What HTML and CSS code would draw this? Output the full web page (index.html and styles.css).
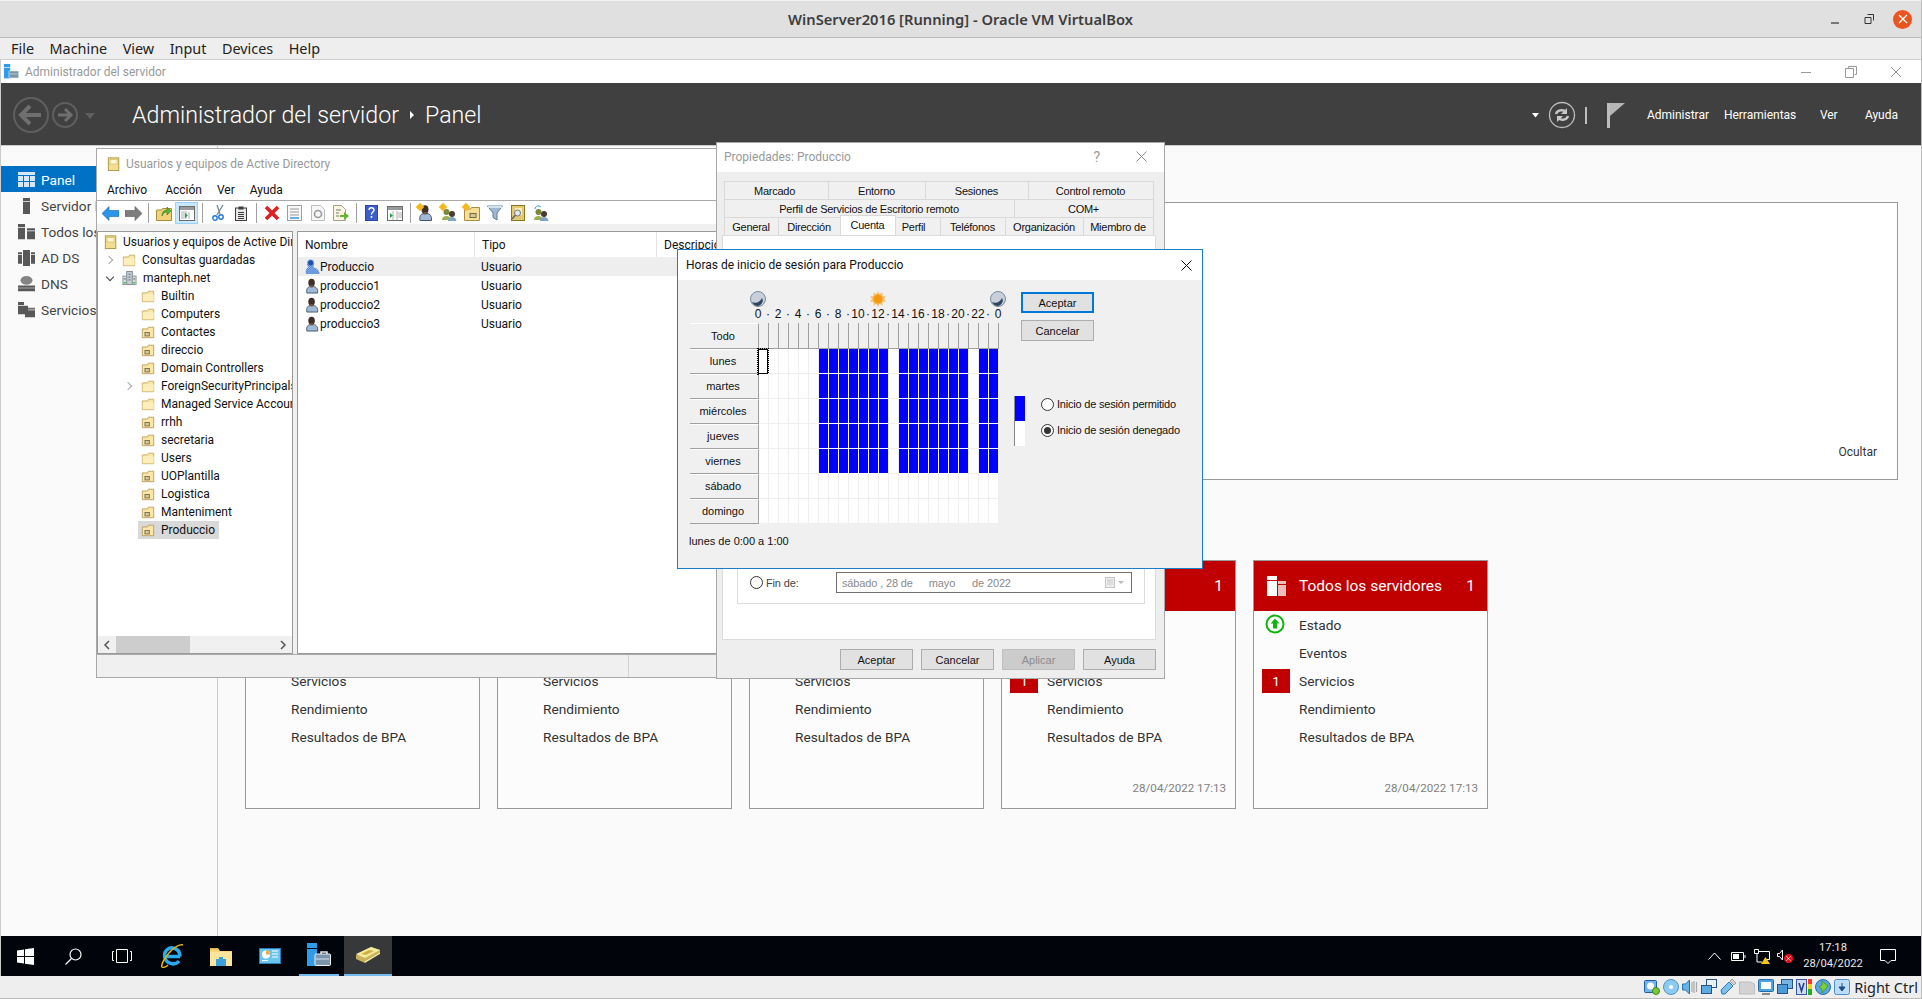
FILE: index.html
```html
<!DOCTYPE html>
<html>

<head>
    <meta charset="utf-8" />
    <title>WinServer2016 [Running] - Oracle VM VirtualBox</title>
    <link rel="stylesheet" href="styles.css">
</head>

<body>
    <svg class="defs" aria-hidden="true">
        <defs>
            <pattern id="dither" width="2" height="2" patternUnits="userSpaceOnUse">
                <rect width="2" height="2" fill="#1f5fc0" />
                <rect width="1" height="1" fill="#bcd6f5" />
                <rect x="1" y="1" width="1" height="1" fill="#bcd6f5" />
            </pattern>
            <symbol id="folder" viewBox="0 0 16 16">
                <path d="M1.5 4.5h6l1-2h6v12h-13z" fill="#fbe6a8" stroke="#c8a964" />
                <path d="M2 6h12.500v8h-12.500z" fill="#fdeebc" />
            </symbol>
            <symbol id="ou" viewBox="0 0 16 16">
                <path d="M1.500 4.500h6l1-2h6v12h-13z" fill="#fbe6a8" stroke="#b79a55" />
                <rect x="4.500" y="8.500" width="5" height="4" fill="#d8c88c" stroke="#6e6a50" />
            </symbol>
            <symbol id="book" viewBox="0 0 16 16">
                <rect x="1.500" y="1" width="12" height="14.500" fill="#f3dd8e" stroke="#a6923e" />
                <rect x="3.500" y="3" width="8" height="5" fill="#fdf6d6" stroke="#c4b060" stroke-width=".6" />
            </symbol>
            <symbol id="domain" viewBox="0 0 16 16">
                <rect x="5" y="1" width="6" height="14" fill="#c6cdd2" stroke="#7f8a92" />
                <rect x="1" y="6" width="4" height="9" fill="#d8dde0" stroke="#8c969d" />
                <rect x="11" y="6" width="4" height="9" fill="#d8dde0" stroke="#8c969d" />
                <path d="M7 4h2M7 7h2M7 10h2" stroke="#56626b" />
                <path d="M2 9h2M12 9h2" stroke="#56626b" />
                <path d="M2 13h2M12 13h2" stroke="#35c43a" stroke-width="1.500" />
            </symbol>
            <symbol id="user" viewBox="0 0 16 16">
                <path d="M2 15.500c-.8-4.500 .7-6.500 4-7h3c3 .5 5 2.500 4.500 7z" fill="#9fb9d6" stroke="#44566c" />
                <ellipse cx="7" cy="4.500" rx="3.500" ry="4.300" fill="#3e3029" />
                <rect x="5.500" y="7" width="3" height="2.500" fill="#6d5342" />
            </symbol>
            <symbol id="user-off" viewBox="0 0 16 16">
                <path d="M1 15.500c-.8-4.500 .7-7 4-7.500h3c3 .5 7.500 3 7.500 7.500z" fill="url(#dither)" />
                <ellipse cx="6" cy="4.500" rx="3.800" ry="4.500" fill="url(#dither)" />
                <ellipse cx="6" cy="3.500" rx="2.600" ry="2.800" fill="#1e50a8" />
            </symbol>
            <symbol id="server-mgr" viewBox="0 0 24 24">
                <rect x="0" y="0" width="10" height="5" fill="#2f9bea" />
                <rect x="0" y="6" width="10" height="17" fill="#2f9bea" />
                <path d="M14 11v-2h6v2" fill="none" stroke="#e9eef2" stroke-width="1.500" />
                <rect x="8" y="11" width="15.500" height="11.500" rx="1" fill="#7c95ab" stroke="#eef3f7" />
                <path d="M9 16h13" stroke="#d7e2ea" />
            </symbol>
        </defs>
    </svg>

    <header class="vbox-title">
        <span>WinServer2016 [Running] - Oracle VM VirtualBox</span>
        <div class="vbox-controls">
            <svg width="12" height="12" viewBox="0 0 12 12"><path d="M2 10h8" stroke="#333" stroke-width="1.200" /></svg>
            <svg width="12" height="12" viewBox="0 0 12 12"><path d="M4.500 1.500h6v6M2 4.500h6v6h-6z" fill="none" stroke="#333" /></svg>
            <span class="vbox-close"><svg width="10" height="10" viewBox="0 0 10 10"><path d="M1 1l8 8M9 1l-8 8" stroke="#fff" stroke-width="1.300" /></svg></span>
        </div>
    </header>
    <nav class="vbox-menu">
        <span>File</span><span>Machine</span><span>View</span><span>Input</span><span>Devices</span><span>Help</span>
    </nav>

    <div class="guest">
        <div class="sm-title">
            <svg class="sm-title-icon" width="15" height="15"><use href="#server-mgr" /></svg>
            <span>Administrador del servidor</span>
            <div class="sm-controls">
                <svg width="12" height="12" viewBox="0 0 12 12"><path d="M1 6.500h10" stroke="#999" /></svg>
                <svg width="12" height="12" viewBox="0 0 12 12"><path d="M3.500 2.500v-2h8v8h-2M.5 2.500h8v9h-8z" fill="none" stroke="#999" /></svg>
                <svg width="12" height="12" viewBox="0 0 12 12"><path d="M1 1l10 10M11 1l-10 10" stroke="#999" /></svg>
            </div>
        </div>

        <div class="sm-header">
            <svg class="nav-arrows" width="100" height="40" viewBox="0 0 100 40">
                <circle cx="18" cy="20" r="17" fill="none" stroke="#5f5f5f" stroke-width="2" />
                <path d="M8 20h20M17 11l-9 9 9 9" fill="none" stroke="#6f6f6f" stroke-width="4" />
                <circle cx="52" cy="20" r="12" fill="none" stroke="#5f5f5f" stroke-width="2" />
                <path d="M45 20h13M52 14l6 6-6 6" fill="none" stroke="#6f6f6f" stroke-width="3" />
                <path d="M72 18h10l-5 6z" fill="#5f5f5f" />
            </svg>
            <h1 class="sm-crumb">Administrador del servidor<i class="crumb-arrow"></i>Panel</h1>
            <div class="sm-actions">
                <svg class="drop" width="7" height="5" viewBox="0 0 7 5"><path d="M0 0h7l-3.500 4.500z" fill="#fff" /></svg>
                <svg width="28" height="28" viewBox="0 0 28 28">
                    <circle cx="14" cy="14" r="12.500" fill="none" stroke="#bdbdbd" stroke-width="1.300" />
                    <path d="M8 13c1-4 7-5 10-2M20 15c-1 4-7 5-10 2" fill="none" stroke="#c9c9c9" stroke-width="2.400" />
                    <path d="M19 7v6h-6zM9 21v-6h6z" fill="#c9c9c9" />
                </svg>
                <i class="action-sep"></i>
                <svg class="flag" width="18" height="25" viewBox="0 0 18 25">
                    <rect x="0" y="0" width="3" height="25" fill="#bdbdbd" />
                    <path d="M3 0h15l-15 13z" fill="#b5b5b5" />
                </svg>
                <div class="sm-menu">
                    <span class="m1">Administrar</span><span class="m2">Herramientas</span><span class="m3">Ver</span><span class="m4">Ayuda</span>
                </div>
            </div>
        </div>

        <div class="sm-main">
            <aside class="sidebar">
                <div class="nav-item selected">
                    <svg width="17" height="15" viewBox="0 0 17 15"><path d="M0 0h17v3h-17zM0 4h5v5h-5zM6 4h5v5h-5zM12 4h5v5h-5zM0 10h5v5h-5zM6 10h5v5h-5zM12 10h5v5h-5z" fill="#d5e8f7" /></svg>
                    <span>Panel</span>
                </div>
                <div class="nav-item">
                    <svg width="17" height="16" viewBox="0 0 17 22" preserveAspectRatio="none"><path d="M5 0h7v4h-7zM5 5h7v17h-7z" fill="#585858" /></svg>
                    <span>Servidor local</span>
                </div>
                <div class="nav-item">
                    <svg width="17" height="16" viewBox="0 0 17 22" preserveAspectRatio="none"><path d="M0 0h7v4h-7zM0 5h7v16h-7zM9 6h8v3h-8zM9 10h8v11h-8z" fill="#585858" /></svg>
                    <span>Todos los servidores</span>
                </div>
                <div class="nav-item">
                    <svg width="17" height="16" viewBox="0 0 17 22" preserveAspectRatio="none"><path d="M5 0h7v22h-7zM0 3h4v3h-4zM13 3h4v3h-4zM0 7h4v12h-4zM13 7h4v12h-4z" fill="#585858" /></svg>
                    <span>AD DS</span>
                </div>
                <div class="nav-item">
                    <svg width="17" height="16" viewBox="0 0 17 22" preserveAspectRatio="none"><circle cx="8.500" cy="6" r="6" fill="#858585" /><path d="M0 13h17v3h-17zM0 17h17v4h-17z" fill="#585858" /></svg>
                    <span>DNS</span>
                </div>
                <div class="nav-item">
                    <svg width="17" height="16" viewBox="0 0 17 22" preserveAspectRatio="none"><path d="M0 0h6v4h-6zM0 5h10v12h-10zM7 8h10v13h-10z" fill="#585858" /><path d="M10 9h7v3h-7z" fill="#9a9a9a" /></svg>
                    <span>Servicios de archivos</span>
                </div>
            </aside>

            <main class="dashboard">
                <section class="welcome"><span>Ocultar</span></section>
                <div class="cards">
                    <article class="card">
                        <div class="card-head"></div>
                        <ul class="card-list">
                            <li></li><li></li><li>Servicios</li><li>Rendimiento</li><li>Resultados de BPA</li>
                        </ul>
                    </article>
                    <article class="card">
                        <div class="card-head"></div>
                        <ul class="card-list">
                            <li></li><li></li><li>Servicios</li><li>Rendimiento</li><li>Resultados de BPA</li>
                        </ul>
                    </article>
                    <article class="card">
                        <div class="card-head"></div>
                        <ul class="card-list">
                            <li></li><li></li><li>Servicios</li><li>Rendimiento</li><li>Resultados de BPA</li>
                        </ul>
                    </article>
                    <article class="card">
                        <div class="card-head"><b>1</b></div>
                        <ul class="card-list">
                            <li></li><li></li><li><i class="badge">1</i>Servicios</li><li>Rendimiento</li><li>Resultados de BPA</li>
                        </ul>
                        <time>28/04/2022 17:13</time>
                    </article>
                    <article class="card">
                        <div class="card-head">
                            <svg width="20" height="20" viewBox="0 0 20 20"><path d="M0 0h10v4h-10zM0 5h10v15h-10z" fill="#fff" /><path d="M11 5h8v3h-8zM11 9h8v11h-8z" fill="#f0bcbc" /></svg>
                            <span>Todos los servidores</span><b>1</b>
                        </div>
                        <ul class="card-list">
                            <li>
                                <svg class="ok" width="20" height="20" viewBox="0 0 20 20"><circle cx="10" cy="10" r="8.500" fill="#fff" stroke="#0fb50f" stroke-width="2" /><path d="M10 4.500l4.500 5h-2.500v5h-4v-5h-2.500z" fill="#0fb50f" /></svg>
                                Estado
                            </li>
                            <li>Eventos</li><li><i class="badge">1</i>Servicios</li><li>Rendimiento</li><li>Resultados de BPA</li>
                        </ul>
                        <time>28/04/2022 17:13</time>
                    </article>
                </div>
            </main>
        </div>

        <footer class="taskbar">
            <svg class="tb-win" width="17" height="17" viewBox="0 0 17 17"><path d="M0 2.500l7-1v6.500h-7zM8 1.300l9-1.300v8h-9zM0 9h7v6.500l-7-1zM8 9h9v8l-9-1.300z" fill="#fff" /></svg>
            <svg class="tb-search" width="17" height="17" viewBox="0 0 17 17"><circle cx="10.500" cy="6.500" r="5.500" fill="none" stroke="#fff" stroke-width="1.200" /><path d="M6.500 10.500l-6 6" stroke="#fff" stroke-width="1.300" /></svg>
            <svg class="tb-view" width="20" height="14" viewBox="0 0 20 14"><path d="M4.500.5h11v13h-11zM2 2.500h-1.500v9h1.500M18 2.500h1.500v9h-1.500" fill="none" stroke="#fff" /></svg>
            <svg class="tb-ie" width="24" height="24" viewBox="0 0 24 24">
                <path d="M20 12.500h-15M19 17c-4 5-12 3-14-3-2-7 4-11 8-10 5 1 7 4 7 8.500" fill="none" stroke="#29aaee" stroke-width="3.500" />
                <path d="M23 1c-3-1-9 2-14 8-5 6-8 12-7 14 1 1 4 0 6-2" fill="none" stroke="#e8b010" stroke-width="1.500" />
            </svg>
            <svg class="tb-folder" width="22" height="19" viewBox="0 0 22 19"><path d="M0 1h8l2 3h12v15h-22z" fill="#f7d67a" /><path d="M0 5h22v14h-22z" fill="#fbe49b" /><path d="M6 19v-7h3v-2h4v2h3v7z" fill="#3b9fdc" /><path d="M0 1h8v1.500h-8z" fill="#e6b84a" /></svg>
            <svg class="tb-panel" width="22" height="16" viewBox="0 0 22 16"><rect width="22" height="16" fill="#2b7fb8" /><rect x="1" y="1" width="20" height="14" fill="#69c4f0" /><circle cx="7" cy="6.500" r="4" fill="#fff" /><path d="M7 6.500v-4a4 4 0 0 1 4 4z" fill="#f2a93b" /><path d="M13 3h6M13 6h6M13 9h6M3 12.500h6" stroke="#fff" /></svg>
            <div class="tb-task open"><svg width="24" height="24"><use href="#server-mgr" /></svg></div>
            <div class="tb-task active">
                <svg width="26" height="18" viewBox="0 0 26 18"><path d="M1 9l15-8 9 3v4l-15 9-9-4z" fill="#c7b45a" /><path d="M1 8l15-7 9 3-15 8z" fill="#f5eba0" /><path d="M6 8l8-4 5 1-8 4z" fill="#d2b040" /><path d="M10 16l15-9" stroke="#fff8c8" /></svg>
            </div>
            <div class="tray">
                <svg class="tray-up" width="13" height="8" viewBox="0 0 13 8"><path d="M.5 7.500l6-6.500 6 6.500" fill="none" stroke="#fff" /></svg>
                <svg width="15" height="9" viewBox="0 0 15 9"><path d="M.5.500h12v8h-12z" fill="none" stroke="#fff" /><path d="M2 2h6v5h-6z" fill="#fff" /><path d="M13.500 3h1v3h-1z" fill="#fff" /></svg>
                <svg width="16" height="16" viewBox="0 0 16 16"><path d="M.5 1.500h4v4h-4zM4.500 3.500h11v8h-5M3 6v8h5" fill="none" stroke="#fff" /><path d="M11.500 9l4.500 7h-9z" fill="#f9c516" /></svg>
                <svg class="tray-vol" width="16" height="14" viewBox="0 0 16 14"><path d="M.5 4.500h2l3-3.500v10l-3-3.500h-2z" fill="none" stroke="#fff" /><circle cx="11.500" cy="9.500" r="4.500" fill="#e81123" /><path d="M9.500 7.500l4 4M13.500 7.500l-4 4" stroke="#fff" /></svg>
                <div class="clock"><span>17:18</span><span>28/04/2022</span></div>
                <svg class="tray-note" width="16" height="15" viewBox="0 0 16 15"><path d="M.5.500h15v11h-4.500l-3 3-3-3h-4.500z" fill="none" stroke="#fff" /></svg>
            </div>
        </footer>
    </div>

    <footer class="vbox-status">
        <svg width="16" height="16" viewBox="0 0 16 16"><rect x=".5" y="1.500" width="12" height="12" rx="1" fill="#6fb4ea" stroke="#1f5f9e" /><circle cx="6.500" cy="7" r="3.500" fill="#fff" /><circle cx="12" cy="12" r="3.500" fill="#79c83c" stroke="#3f8e1c" /></svg>
        <svg width="16" height="16" viewBox="0 0 16 16"><circle cx="8" cy="8" r="7.500" fill="#8ecbf1" stroke="#4e93c8" /><circle cx="8" cy="8" r="2" fill="#fff" /></svg>
        <svg width="16" height="16" viewBox="0 0 16 16"><path d="M.5 5h3l4-4v14l-4-4h-3z" fill="#65b2e8" stroke="#2e6fa6" /><path d="M10 3v10M12 2v12M14.500 3v10" stroke="#a9a9a9" stroke-width="1.200" /></svg>
        <svg width="16" height="16" viewBox="0 0 16 16"><rect x="5.500" y=".5" width="10" height="8" fill="#e7eef5" stroke="#27547d" /><rect x=".5" y="6.500" width="10" height="8" fill="#5baae3" stroke="#27547d" /></svg>
        <svg width="16" height="16" viewBox="0 0 16 16"><path d="M1 11l8-8 4 4-8 8H2z" fill="#7cc0f0" stroke="#2e79b5" /><path d="M10 2l2-2 4 4-2 2z" fill="#d5d5d5" stroke="#777" stroke-width=".6" /></svg>
        <svg width="16" height="16" viewBox="0 0 16 16"><path d="M.5 3h11l4 2v10h-15z" fill="#d2d2d2" stroke="#bdbdbd" /></svg>
        <svg width="16" height="16" viewBox="0 0 16 16"><rect x=".5" y=".5" width="15" height="12" rx="1" fill="#4ea4e0" stroke="#236ba4" /><rect x="3" y="3" width="10" height="7" fill="#fff" /><path d="M4 15h8" stroke="#888" stroke-width="2" /></svg>
        <svg width="16" height="16" viewBox="0 0 16 16"><rect x="4.500" y=".5" width="11" height="9" fill="#74b4e6" stroke="#27547d" /><rect x=".5" y="5.500" width="10" height="9" fill="#4c9bdc" stroke="#27547d" /></svg>
        <svg width="16" height="16" viewBox="0 0 16 16"><rect x=".5" y=".5" width="10" height="15" fill="#cfdcef" stroke="#3a55a0" /><path d="M3 4l2.500 8 2.500-8" fill="none" stroke="#2a3f90" stroke-width="1.600" /><path d="M12 0h4v5h-4z" fill="#ff3a1a" /><path d="M12 5h4v5h-4z" fill="#f0d010" /><path d="M12 10h4v6h-4z" fill="#20b020" /></svg>
        <svg width="16" height="16" viewBox="0 0 16 16"><circle cx="8" cy="8" r="7.500" fill="#57a7e0" stroke="#2d6ea3" /><path d="M7 2l6 5-6 7v-4l-3-2 3-2z" fill="#7fce3a" stroke="#3d8d22" stroke-width=".7" /></svg>
        <svg width="16" height="16" viewBox="0 0 16 16"><rect x=".5" y=".5" width="15" height="15" rx="2" fill="#bcdcf7" stroke="#4a8fca" /><path d="M8 4v5M5 8h6l-3 4z" stroke="#1a4c84" fill="#1a4c84" /></svg>
        <span>Right Ctrl</span>
    </footer>

    <!-- Usuarios y equipos -->
    <section class="win ad-win">
        <div class="ad-title">
            <svg width="14" height="16"><use href="#book" /></svg>
            <span>Usuarios y equipos de Active Directory</span>
        </div>
        <div class="ad-menu"><span>Archivo</span><span>Acción</span><span>Ver</span><span>Ayuda</span></div>
        <div class="toolbar">
            <button><svg width="17" height="15" viewBox="0 0 17 15"><path d="M0 7.500l7-7v4h10v6h-10v4z" fill="#2b96e8" stroke="#1a63ad" stroke-width=".6" /></svg></button>
            <button><svg width="17" height="15" viewBox="0 0 17 15"><path d="M17 7.500l-7-7v4h-10v6h10v4z" fill="#7d7d7d" stroke="#5c5c5c" stroke-width=".6" /></svg></button>
            <i class="tool-sep first"></i>
            <button><svg width="16" height="16" viewBox="0 0 16 16"><path d="M.5 5h5l1-1.500h9v12h-15z" fill="#f2d27a" stroke="#a88d3c" /><path d="M6 11c0-4 2-6 5-6v-3l4 4-4 4v-3c-2 0-4 1-5 4z" fill="#5fb52f" stroke="#2e7c12" stroke-width=".6" /></svg></button>
            <button class="on"><svg width="16" height="15" viewBox="0 0 16 15"><rect x=".5" y=".5" width="15" height="14" fill="#fff" stroke="#6d6d6d" /><path d="M1 1h14v3h-14z" fill="#9a9a9a" /><path d="M10 6v7M2 6h6M2 8h6M2 10h6M2 12h6" stroke="#b0b0b0" /><path d="M9 9.500l-3-2.500v5z" fill="#1fa54a" /></svg></button>
            <i class="tool-sep"></i>
            <button><svg width="12" height="16" viewBox="0 0 12 16"><path d="M11 0l-6 10M5 0l3 9" stroke="#7a8791" stroke-width="1.300" /><circle cx="3" cy="13" r="2.200" fill="none" stroke="#1f78d8" stroke-width="1.400" /><circle cx="9" cy="12" r="2.200" fill="none" stroke="#1f78d8" stroke-width="1.400" /></svg></button>
            <button><svg width="12" height="15" viewBox="0 0 12 15"><rect x=".5" y="2" width="11" height="12.500" fill="#e8e8e8" stroke="#3c3c3c" /><rect x="3.500" y=".5" width="5" height="3" fill="#3c3c3c" /><path d="M3 6.500h6M3 8.500h6M3 10.500h6M3 12.500h6" stroke="#3c3c3c" /></svg></button>
            <i class="tool-sep"></i>
            <button><svg width="16" height="16" viewBox="0 0 16 16"><path d="M2 2l12 12M14 2l-12 12" stroke="#e02020" stroke-width="3.600" /></svg></button>
            <button><svg width="15" height="16" viewBox="0 0 15 16"><rect x=".5" y=".5" width="14" height="15" fill="#f7f7f7" stroke="#a0a0a0" /><path d="M3 4h9M3 7h9M3 10h9" stroke="#9a9a9a" /><path d="M3 13h9" stroke="#3a96d8" stroke-width="1.500" /></svg></button>
            <button><svg width="14" height="16" viewBox="0 0 14 16"><path d="M.5.500h9l4 4v11h-13z" fill="#f7f7f7" stroke="#bdbdbd" /><circle cx="7" cy="9" r="3.500" fill="none" stroke="#9a9a9a" stroke-width="1.600" /></svg></button>
            <button><svg width="16" height="16" viewBox="0 0 16 16"><path d="M.5.500h8l4 4v11h-12z" fill="#fbf6e4" stroke="#a8a08c" /><path d="M3 5h5M3 8h3M3 11h3" stroke="#777" /><path d="M7 10h4v-3l5 4-5 4v-3h-4z" fill="#62b52d" /></svg></button>
            <i class="tool-sep"></i>
            <button><svg width="13" height="16" viewBox="0 0 13 16"><rect width="13" height="16" fill="#2d46a8" /><rect x="1" y="1" width="11" height="14" fill="#3c5ecb" /><path d="M4 5c0-3 5-3 5 0 0 2-2.500 2-2.500 4.500" fill="none" stroke="#fff" stroke-width="1.400" /><rect x="5.700" y="11" width="1.600" height="1.800" fill="#fff" /></svg></button>
            <button><svg width="16" height="15" viewBox="0 0 16 15"><rect x=".5" y=".5" width="15" height="14" fill="#fff" stroke="#6d6d6d" /><path d="M1 1h14v3h-14z" fill="#9a9a9a" /><path d="M6 5v9M10 5v9M11 7h4M11 9h4M11 11h4" stroke="#b0b0b0" /><path d="M3 7l3 2.500-3 2.500z" fill="#1fa54a" /></svg></button>
            <i class="tool-sep"></i>
            <button><svg width="16" height="16"><use href="#user" /></svg><i class="spark"></i></button>
            <button><svg width="16" height="16" viewBox="0 0 16 16"><circle cx="5.500" cy="7" r="3" fill="#7a8a3a" /><path d="M1 15c0-3 2-4 4.500-4s4 1 4 4z" fill="#9bb04e" /><circle cx="11" cy="9" r="3" fill="#4b3a30" /><path d="M7 16c0-3 2-4 4-4s4 1 4.500 4z" fill="#7fa3c7" /></svg><i class="spark"></i></button>
            <button><svg width="16" height="16" viewBox="0 0 16 16"><path d="M.5 4h6l1-1.500h8v13h-15z" fill="#f6df94" stroke="#a98e3f" /><rect x="6" y="8.500" width="6" height="4" fill="#d8c88c" stroke="#6e6a50" /></svg><i class="spark"></i></button>
            <button><svg width="16" height="16" viewBox="0 0 16 16"><path d="M.5 1h15l-5.500 7v7l-4-2.500v-4.500z" fill="#9db9d0" stroke="#5d7f9c" /><path d="M1 1h14v2h-14z" fill="#d5e2ec" /></svg></button>
            <button><svg width="14" height="16" viewBox="0 0 14 16"><rect x=".5" y=".5" width="13" height="15" fill="#e3cb73" stroke="#8a7424" /><rect x="4" y="3" width="7" height="7" fill="#f6ecc0" /><circle cx="6.500" cy="8" r="3" fill="#dcebf6" stroke="#777" /><path d="M4.500 10l-3.500 4" stroke="#666" stroke-width="1.500" /></svg></button>
            <button><svg width="16" height="16" viewBox="0 0 16 16"><circle cx="5.500" cy="7" r="3" fill="#7a8a3a" /><path d="M1 15c0-3 2-4 4.500-4s4 1 4 4z" fill="#9bb04e" /><circle cx="11" cy="9" r="3" fill="#4b3a30" /><path d="M7 16c0-3 2-4 4-4s4 1 4.500 4z" fill="#7fa3c7" /><path d="M2 4c0-3 4-4 6-2" fill="none" stroke="#2b96e8" /></svg></button>
        </div>
        <div class="ad-panes">
            <div class="tree">
                <div class="tree-rows">
                    <div class="tree-row lv0"><svg width="14" height="16"><use href="#book" /></svg><span>Usuarios y equipos de Active Directory</span></div>
                    <div class="tree-row lv1"><i class="chev right"></i><svg width="14" height="16"><use href="#folder" /></svg><span>Consultas guardadas</span></div>
                    <div class="tree-row lv1"><i class="chev down"></i><svg width="15" height="16"><use href="#domain" /></svg><span>manteph.net</span></div>
                    <div class="tree-row lv2"><svg width="14" height="16"><use href="#folder" /></svg><span>Builtin</span></div>
                    <div class="tree-row lv2"><svg width="14" height="16"><use href="#folder" /></svg><span>Computers</span></div>
                    <div class="tree-row lv2"><svg width="14" height="16"><use href="#ou" /></svg><span>Contactes</span></div>
                    <div class="tree-row lv2"><svg width="14" height="16"><use href="#ou" /></svg><span>direccio</span></div>
                    <div class="tree-row lv2"><svg width="14" height="16"><use href="#ou" /></svg><span>Domain Controllers</span></div>
                    <div class="tree-row lv2"><i class="chev right"></i><svg width="14" height="16"><use href="#folder" /></svg><span>ForeignSecurityPrincipals</span></div>
                    <div class="tree-row lv2"><svg width="14" height="16"><use href="#folder" /></svg><span>Managed Service Accounts</span></div>
                    <div class="tree-row lv2"><svg width="14" height="16"><use href="#ou" /></svg><span>rrhh</span></div>
                    <div class="tree-row lv2"><svg width="14" height="16"><use href="#ou" /></svg><span>secretaria</span></div>
                    <div class="tree-row lv2"><svg width="14" height="16"><use href="#folder" /></svg><span>Users</span></div>
                    <div class="tree-row lv2"><svg width="14" height="16"><use href="#ou" /></svg><span>UOPlantilla</span></div>
                    <div class="tree-row lv2"><svg width="14" height="16"><use href="#ou" /></svg><span>Logistica</span></div>
                    <div class="tree-row lv2"><svg width="14" height="16"><use href="#ou" /></svg><span>Manteniment</span></div>
                    <div class="tree-row lv2 current"><svg width="14" height="16"><use href="#ou" /></svg><span>Produccio</span></div>
                </div>
                <div class="hscroll">
                    <svg width="7" height="10" viewBox="0 0 7 10"><path d="M6 1l-4 4 4 4" fill="none" stroke="#555" stroke-width="1.500" /></svg>
                    <i class="thumb"></i>
                    <svg width="7" height="10" viewBox="0 0 7 10"><path d="M1 1l4 4-4 4" fill="none" stroke="#555" stroke-width="1.500" /></svg>
                </div>
            </div>
            <div class="list">
                <div class="list-head"><span>Nombre</span><span>Tipo</span><span>Descripción</span></div>
                <div class="list-row sel"><svg width="15" height="16"><use href="#user-off" /></svg><span>Produccio</span><span>Usuario</span></div>
                <div class="list-row"><svg width="15" height="16"><use href="#user" /></svg><span>produccio1</span><span>Usuario</span></div>
                <div class="list-row"><svg width="15" height="16"><use href="#user" /></svg><span>produccio2</span><span>Usuario</span></div>
                <div class="list-row"><svg width="15" height="16"><use href="#user" /></svg><span>produccio3</span><span>Usuario</span></div>
            </div>
        </div>
        <div class="ad-status"><i></i></div>
    </section>

    <!-- Propiedades -->
    <section class="win props-win">
        <div class="props-title">
            <span>Propiedades: Produccio</span>
            <span class="help-mark">?</span>
            <svg width="11" height="11" viewBox="0 0 11 11"><path d="M.5.500l10 10M10.500.500l-10 10" stroke="#8a8a8a" /></svg>
        </div>
        <div class="props-body">
            <div class="tab-row row-a"><span class="t-mark">Marcado</span><span>Entorno</span><span>Sesiones</span><span>Control remoto</span></div>
            <div class="tab-row row-b"><span>Perfil de Servicios de Escritorio remoto</span><span>COM+</span></div>
            <div class="tab-row row-c"><span>General</span><span>Dirección</span><span class="active">Cuenta</span><span class="t-perfil">Perfil</span><span>Teléfonos</span><span>Organización</span><span>Miembro de</span></div>
            <div class="tab-panel">
                <div class="group">
                    <label class="radio"><i class="dot"></i>Fin de:</label>
                    <div class="date-box">
                        <span>sábado</span><span>, 28 de</span><span class="d-month">mayo</span><span>de 2022</span>
                        <svg class="date-pick" width="20" height="11" viewBox="0 0 20 11"><rect x=".5" y=".5" width="9" height="10" fill="#eee" stroke="#c4c4c4" /><path d="M2 3h6M2 5h6M2 7h6" stroke="#c8c8c8" /><path d="M13 4h6l-3 3z" fill="#bbb" /></svg>
                    </div>
                </div>
            </div>
            <div class="props-buttons">
                <button class="btn">Aceptar</button>
                <button class="btn">Cancelar</button>
                <button class="btn disabled">Aplicar</button>
                <button class="btn">Ayuda</button>
            </div>
        </div>
    </section>

    <!-- Horas de inicio de sesion -->
    <section class="win hours-win">
        <div class="hours-title">
            <span>Horas de inicio de sesión para Produccio</span>
            <svg width="11" height="11" viewBox="0 0 11 11"><path d="M.5.500l10 10M10.500.500l-10 10" stroke="#111" /></svg>
        </div>
        <div class="hours-body">
            <div class="schedule">
                <div class="sky">
                    <svg width="16" height="16" viewBox="0 0 16 16"><circle cx="8" cy="8" r="7.500" fill="#c7d0da" stroke="#7d8b9b" /><path d="M2 11c4 2 8 0 10-4 2 3 0 7-4 8-3 0-5-2-6-4z" fill="#2f4560" /></svg>
                    <svg width="16" height="16" viewBox="0 0 16 16"><path d="M8 0l1.500 3 3-1.500 0 3.500 3.500.500-2 2.500 2 2.500-3.500.500 0 3.500-3-1.500-1.500 3-1.500-3-3 1.500 0-3.500-3.500-.500 2-2.500-2-2.500 3.500-.500 0-3.500 3 1.500z" fill="#f6c16a" /><circle cx="8" cy="8" r="4.500" fill="#f39a10" /></svg>
                    <svg width="16" height="16" viewBox="0 0 16 16"><circle cx="8" cy="8" r="7.500" fill="#c7d0da" stroke="#7d8b9b" /><path d="M2 11c4 2 8 0 10-4 2 3 0 7-4 8-3 0-5-2-6-4z" fill="#2f4560" /></svg>
                </div>
                <div class="hour-labels">
                    <span>0</span><span>·</span><span>2</span><span>·</span><span>4</span><span>·</span><span>6</span><span>·</span><span>8</span><span>·</span><span>10</span><span>·</span><span>12</span><span>·</span><span>14</span><span>·</span><span>16</span><span>·</span><span>18</span><span>·</span><span>20</span><span>·</span><span>22</span><span>·</span><span>0</span>
                </div>
                <div class="grid-row top-row">
                    <div class="day-btn">Todo</div>
                    <div class="hour-heads"></div>
                </div>
                <div class="grid-row">
                    <div class="day-btn">lunes</div>
                    <div class="cells"><i class="focus"></i><i class="run r1"></i><i class="run r2"></i><i class="run r3"></i></div>
                </div>
                <div class="grid-row">
                    <div class="day-btn">martes</div>
                    <div class="cells"><i class="run r1"></i><i class="run r2"></i><i class="run r3"></i></div>
                </div>
                <div class="grid-row">
                    <div class="day-btn">miércoles</div>
                    <div class="cells"><i class="run r1"></i><i class="run r2"></i><i class="run r3"></i></div>
                </div>
                <div class="grid-row">
                    <div class="day-btn">jueves</div>
                    <div class="cells"><i class="run r1"></i><i class="run r2"></i><i class="run r3"></i></div>
                </div>
                <div class="grid-row">
                    <div class="day-btn">viernes</div>
                    <div class="cells"><i class="run r1"></i><i class="run r2"></i><i class="run r3"></i></div>
                </div>
                <div class="grid-row">
                    <div class="day-btn">sábado</div>
                    <div class="cells"></div>
                </div>
                <div class="grid-row">
                    <div class="day-btn">domingo</div>
                    <div class="cells"></div>
                </div>
                <p class="hours-note">lunes de 0:00 a 1:00</p>
            </div>
            <div class="hours-side">
                <div class="side-buttons">
                    <button class="btn default">Aceptar</button>
                    <button class="btn">Cancelar</button>
                </div>
                <div class="legend">
                    <div class="legend-bar"><i></i><i></i></div>
                    <div class="legend-options">
                        <label class="radio"><i class="dot"></i>Inicio de sesión permitido</label>
                        <label class="radio"><i class="dot checked"></i>Inicio de sesión denegado</label>
                    </div>
                </div>
            </div>
        </div>
    </section>
</body>

</html>
```

FILE: styles.css
```css
* {
    box-sizing: border-box;
}

html,
body {
    margin: 0;
    padding: 0;
}

body {
    position: relative;
    display: flex;
    flex-direction: column;
    width: 1922px;
    height: 999px;
    overflow: hidden;
    font-family: 'Roboto', 'Liberation Sans', sans-serif;
    font-size: 12px;
    color: #111;
    background-color: #eee;
    border-right: 1px solid #bbb;
}

svg {
    display: block;
    flex: none;
}

.defs {
    position: absolute;
    width: 0;
    height: 0;
}

/* host window */
.vbox-title {
    flex: none;
    height: 38px;
    position: relative;
    display: flex;
    align-items: center;
    justify-content: center;
    padding-bottom: 1px;
    background-color: #e0e0e0;
    border-top: 1px solid #f2f2f2;
    border-bottom: 1px solid #b9b9b9;
    font-family: 'Noto Sans', sans-serif;
    font-size: 14.700px;
    font-weight: 600;
    color: #3d3d3d;
}

.vbox-controls {
    position: absolute;
    right: 9px;
    top: 0;
    bottom: 0;
    display: flex;
    align-items: center;
    gap: 22px;
}

.vbox-close {
    width: 19px;
    height: 19px;
    margin-left: -4px;
    display: flex;
    align-items: center;
    justify-content: center;
    border-radius: 50%;
    background-color: #e95420;
}

.vbox-menu {
    flex: none;
    height: 22px;
    display: flex;
    align-items: center;
    gap: 15.500px;
    padding-left: 11px;
    background-color: #eee;
    border-bottom: 1px solid #d0d0d0;
    font-family: 'Noto Sans', sans-serif;
    font-size: 14.400px;
    color: #222;
}

.vbox-status {
    flex: none;
    height: 23px;
    display: flex;
    align-items: center;
    justify-content: flex-end;
    gap: 3px;
    padding-right: 3px;
    background-color: #eee;
    border-bottom: 1px solid #bbb;
    font-family: 'Noto Sans', sans-serif;
    font-size: 14.500px;
    color: #222;
}

.vbox-status span {
    margin-left: 1px;
}

/* guest desktop */
.guest {
    flex: 1;
    min-height: 0;
    display: flex;
    flex-direction: column;
    border-left: 1px solid #ccc;
}

.sm-title {
    flex: none;
    height: 23px;
    display: flex;
    align-items: center;
    gap: 6px;
    padding-left: 3px;
    background-color: #fff;
    color: #999;
}

.sm-controls {
    margin-left: auto;
    display: flex;
    gap: 33px;
    padding-right: 19px;
}

.sm-header {
    flex: none;
    height: 63px;
    display: flex;
    align-items: center;
    padding: 2px 0 0 12px;
    background-color: #404040;
    border-bottom: 1px solid #ccc;
    color: #fff;
}

.sm-crumb {
    margin: 0 0 0 19px;
    font-size: 23.200px;
    font-weight: 300;
    display: flex;
    align-items: center;
}

.crumb-arrow {
    width: 0;
    height: 0;
    margin: 0 11px 0 11px;
    border-left: 4px solid #fff;
    border-top: 4px solid transparent;
    border-bottom: 4px solid transparent;
}

.sm-actions {
    margin-left: auto;
    display: flex;
    align-items: center;
}

.drop {
    margin-right: 9px;
}

.action-sep {
    width: 2px;
    height: 17px;
    margin: 0 20px 0 9px;
    background-color: #bdbdbd;
}

.flag {
    margin-right: 22px;
}

.sm-menu {
    display: flex;
    padding-right: 23px;
}

.m1 {
    width: 77px;
}

.m2 {
    width: 96px;
}

.m3 {
    width: 45px;
}

.sm-main {
    flex: 1;
    min-height: 0;
    display: flex;
    background-color: #fafafa;
}

.sidebar {
    flex: none;
    width: 217px;
    padding-top: 20px;
    border-right: 1px solid #ccc;
}

.nav-item {
    width: 96px;
    height: 26px;
    display: flex;
    align-items: center;
    gap: 6px;
    padding: 1px 0 0 17px;
    overflow: hidden;
    font-size: 13.700px;
    color: #444;
    white-space: nowrap;
}

.nav-item.selected {
    background-color: #0072c6;
    color: #fff;
}

.dashboard {
    flex: 1;
    min-width: 0;
    padding: 56px 23px 0 27px;
}

.welcome {
    height: 278px;
    display: flex;
    align-items: flex-end;
    justify-content: flex-end;
    padding: 0 20px 20px 0;
    background-color: #fff;
    border: 1px solid #999;
    color: #333;
}

.cards {
    display: flex;
    gap: 17px;
    margin-top: 80px;
}

.card {
    width: 235px;
    height: 249px;
    display: flex;
    flex-direction: column;
    background-color: #fcfcfc;
    border: 1px solid #999;
}

.card-head {
    flex: none;
    height: 50px;
    display: flex;
    align-items: center;
    gap: 12px;
    padding: 0 12px 0 13px;
    background-color: #c00000;
    color: #fff;
    font-size: 15.500px;
}

.card-head b {
    margin-left: auto;
    font-weight: 400;
}

.card-list {
    list-style: none;
    margin: 0;
    padding: 0;
    font-size: 13.700px;
    color: #333;
}

.card-list li {
    position: relative;
    height: 28px;
    display: flex;
    align-items: center;
    padding-left: 45px;
}

.badge,
.ok {
    position: absolute;
    left: 8px;
}

.badge {
    top: 2px;
    width: 28px;
    height: 24px;
    display: flex;
    align-items: center;
    justify-content: center;
    background-color: #c00000;
    color: #fff;
    font-style: normal;
}

.ok {
    left: 11px;
    top: 3px;
}

.card time {
    margin-top: auto;
    padding: 0 9px 13px 0;
    text-align: right;
    font-size: 11.600px;
    color: #808080;
}

/* taskbar */
.taskbar {
    flex: none;
    height: 40px;
    display: flex;
    align-items: center;
    background-color: #01040a;
    color: #fff;
}

.tb-win {
    margin-left: 16px;
}

.tb-search {
    margin-left: 31px;
}

.tb-view {
    margin-left: 30px;
}

.tb-ie {
    margin-left: 28px;
}

.tb-folder {
    margin-left: 26px;
}

.tb-panel {
    margin-left: 27px;
}

.tb-task {
    height: 40px;
    display: flex;
    align-items: center;
    justify-content: center;
    border-bottom: 2px solid #76b9ed;
}

.tb-task.open {
    width: 40px;
    margin-left: 18px;
}

.tb-task.active {
    width: 48px;
    margin-left: 5px;
    background-color: #36383a;
}

.tray {
    margin-left: auto;
    display: flex;
    align-items: center;
    padding-right: 25px;
    gap: 8px;
}

.tray-up {
    margin-right: 2px;
}

.tray-vol {
    margin-left: -1px;
}

.clock {
    width: 60px;
    margin-left: 2px;
    display: flex;
    flex-direction: column;
    align-items: center;
    gap: 3px;
    margin-top: -1px;
    font-size: 11.200px;
    color: #e8e8e8;
}

.tray-note {
    margin-left: 9px;
}

/* floating windows */
.win {
    position: absolute;
}

.ad-win {
    left: 96px;
    top: 148px;
    width: 640px;
    height: 530px;
    display: flex;
    flex-direction: column;
    background-color: #fff;
    border: 1px solid #a8a8a8;
}

.ad-title {
    flex: none;
    height: 27px;
    display: flex;
    align-items: center;
    gap: 5px;
    padding: 2px 0 0 10px;
    color: #999;
}

.ad-menu {
    flex: none;
    height: 25px;
    display: flex;
    align-items: center;
    padding: 3px 0 0 10px;
    gap: 15px;
    border-bottom: 1px solid #aaa;
}

.ad-menu span:nth-child(2) {
    margin-left: 3px;
}

.toolbar {
    flex: none;
    height: 23px;
    display: flex;
    align-items: center;
    padding: 1px 0 0 2px;
    background-color: #fff;
}

.toolbar button {
    position: relative;
    width: 23px;
    height: 22px;
    display: flex;
    align-items: center;
    justify-content: center;
    padding: 0;
    background: none;
    border: 1px solid transparent;
}

.toolbar button.on {
    background-color: #cce8ff;
    border-color: #99d1ff;
}

.tool-sep {
    width: 8px;
    height: 20px;
    background: linear-gradient(#a0a0a0, #a0a0a0) no-repeat center / 1px 100%;
}

.tool-sep.first {
    margin-left: -1px;
}

.spark {
    position: absolute;
    left: 2px;
    top: 1px;
    width: 6px;
    height: 6px;
    background-color: #f5b91e;
    transform: rotate(45deg);
}

.ad-panes {
    flex: 1;
    min-height: 0;
    display: flex;
    gap: 4px;
    padding-top: 7px;
    background-color: #f0f0f0;
}

.tree {
    flex: none;
    width: 196px;
    display: flex;
    flex-direction: column;
    background-color: #fff;
    border: 1px solid #9a9a9a;
}

.tree-rows {
    flex: 1;
    min-height: 0;
    padding-top: 1px;
    overflow: hidden;
}

.tree-row {
    position: relative;
    height: 18px;
    display: flex;
    align-items: center;
    gap: 6px;
    white-space: nowrap;
}

.tree-row.lv0 {
    padding-left: 6px;
    gap: 5px;
}

.tree-row.lv1 {
    padding-left: 24px;
}

.tree-row.lv2 {
    padding-left: 43px;
}

.tree-row.current::before {
    content: '';
    position: absolute;
    left: 40px;
    top: 0;
    width: 81px;
    height: 18px;
    background-color: #d9d9d9;
}

.tree-row.current svg,
.tree-row.current span {
    position: relative;
}

.chev {
    position: absolute;
    width: 6px;
    height: 6px;
    border-right: 1.500px solid #a6a6a6;
    border-bottom: 1.500px solid #a6a6a6;
    transform: rotate(-45deg);
}

.chev.down {
    left: 9px;
    top: 5px;
    border-color: #404040;
    transform: rotate(45deg);
}

.lv1 .chev.right {
    left: 8px;
    top: 6px;
}

.lv2 .chev.right {
    left: 27px;
    top: 6px;
}

.hscroll {
    flex: none;
    height: 17px;
    display: flex;
    align-items: center;
    justify-content: space-between;
    padding: 0 5px;
    background-color: #f0f0f0;
}

.thumb {
    width: 74px;
    height: 17px;
    margin: 0 auto 0 6px;
    background-color: #cdcdcd;
}

.list {
    flex: 1;
    min-width: 0;
    background-color: #fff;
    border: 1px solid #9a9a9a;
}

.list-head {
    height: 25px;
    display: flex;
    align-items: center;
}

.list-head span {
    height: 100%;
    display: flex;
    align-items: center;
    padding-left: 7px;
    border-right: 1px solid #e3e3e3;
}

.list-head span:nth-child(1) {
    width: 177px;
}

.list-head span:nth-child(2) {
    width: 182px;
}

.list-row {
    height: 19px;
    display: flex;
    align-items: center;
    padding-left: 7px;
}

.list-row span:first-of-type {
    width: 161px;
}

.list-row.sel {
    background-color: #eee;
}

.ad-status {
    flex: none;
    height: 23px;
    background-color: #f0f0f0;
    border-top: 1px solid #aaa;
}

.ad-status i {
    display: block;
    width: 532px;
    height: 100%;
    border-right: 1px solid #d5d5d5;
}

/* propiedades */
.props-win {
    left: 716px;
    top: 142px;
    width: 449px;
    height: 537px;
    display: flex;
    flex-direction: column;
    background-color: #eee;
    border: 1px solid #a8a8a8;
    font-family: 'Liberation Sans', sans-serif;
    font-size: 11px;
}

.props-title {
    flex: none;
    height: 29px;
    display: flex;
    align-items: center;
    padding: 0 17px 2px 7px;
    background-color: #fff;
    font-family: 'Roboto', sans-serif;
    font-size: 12px;
    color: #999;
}

.help-mark {
    margin-left: auto;
    margin-right: 36px;
    font-size: 14px;
}

.props-body {
    flex: 1;
    min-height: 0;
    display: flex;
    flex-direction: column;
    padding: 9px 8px 8px 5px;
}

.tab-row {
    display: grid;
    flex: none;
    height: 18px;
    margin: 0 2px 0 3px;
    letter-spacing: -.25px;
}

.row-a {
    grid-template-columns: 104px 97px 103px 125px;
}

.row-b {
    grid-template-columns: 290px 139px;
}

.row-c {
    grid-template-columns: 54px 62px 55px 45px 65px 78px 70px;
}

.tab-row span {
    display: flex;
    align-items: center;
    justify-content: center;
    padding-right: 1px;
    background-color: #f0f0f0;
    border: 1px solid #d9d9d9;
    border-width: 1px 1px 0 1px;
    margin-left: -1px;
    white-space: nowrap;
}

.tab-row span.active {
    position: relative;
    z-index: 1;
    height: 20px;
    margin-top: -2px;
    padding-bottom: 2px;
    background-color: #fff;
}

.tab-row span.t-perfil {
    padding-right: 9px;
}

.tab-row span.t-mark {
    padding-right: 4px;
}

.tab-panel {
    flex: 1;
    min-height: 0;
    display: flex;
    flex-direction: column;
    justify-content: flex-end;
    padding: 0 10px 35px 14px;
    background-color: #fff;
    border: 1px solid #dcdcdc;
}

.group {
    height: 60px;
    display: flex;
    align-items: flex-end;
    padding: 0 12px 10px 12px;
    border: 1px solid #dcdcdc;
    letter-spacing: -.15px;
    color: #444;
}

.radio {
    display: flex;
    align-items: center;
    gap: 3px;
    height: 14px;
}

.group .radio {
    width: 86px;
    height: 21px;
}

.dot {
    position: relative;
    flex: none;
    width: 13px;
    height: 13px;
    border: 1px solid #333;
    border-radius: 50%;
    background-color: #fff;
}

.dot.checked::after {
    content: '';
    position: absolute;
    left: 2px;
    top: 2px;
    width: 7px;
    height: 7px;
    border-radius: 50%;
    background-color: #333;
}

.date-box {
    flex: 1;
    height: 21px;
    display: flex;
    align-items: center;
    gap: 3px;
    padding: 0 6px 0 5px;
    border: 1px solid #707070;
    color: #8a8a8a;
}

.d-month {
    margin: 0 14px 0 13px;
}

.date-pick {
    margin-left: auto;
}

.props-buttons {
    flex: none;
    display: flex;
    justify-content: flex-end;
    gap: 8px;
    margin-top: 9px;
}

.btn {
    width: 73px;
    height: 21px;
    padding: 0;
    font-family: 'Liberation Sans', sans-serif;
    font-size: 11px;
    color: #111;
    background-color: #e1e1e1;
    border: 1px solid #adadad;
}

.btn.disabled {
    color: #8c8c8c;
    background-color: #ccc;
    border-color: #bfbfbf;
}

.btn.default {
    border: 2px solid #0078d7;
}

/* horas */
.hours-win {
    left: 677px;
    top: 249px;
    width: 526px;
    height: 320px;
    display: flex;
    flex-direction: column;
    background-color: #f0f0f0;
    border: 1px solid #1a7fc8;
    font-family: 'Liberation Sans', sans-serif;
    font-size: 11px;
}

.hours-title {
    flex: none;
    height: 30px;
    display: flex;
    align-items: center;
    justify-content: space-between;
    padding: 0 10px 0 8px;
    background-color: #fff;
    font-family: 'Roboto', sans-serif;
    font-size: 12px;
}

.hours-body {
    flex: 1;
    min-height: 0;
    display: flex;
    padding: 11px 0 0 12px;
}

.schedule {
    flex: none;
    width: 310px;
}

.sky {
    height: 16px;
    margin: 0 0 0 60px;
    display: flex;
    justify-content: space-between;
    width: 256px;
}

.hour-labels {
    height: 16px;
    display: flex;
    margin-left: 63px;
    font-size: 12px;
}

.hour-labels span {
    flex: none;
    width: 10px;
    display: flex;
    justify-content: center;
}

.grid-row {
    display: flex;
    height: 25px;
}

.top-row {
    height: 26px;
}

.day-btn {
    flex: none;
    width: 69px;
    display: flex;
    align-items: center;
    justify-content: center;
    padding: 0 2px 1px 0;
    background-color: #f0f0f0;
    border-top: 1px solid #fff;
    border-right: 1px solid #a0a0a0;
    border-bottom: 1px solid #a0a0a0;
}

.hour-heads {
    width: 240px;
    background:
        linear-gradient(#a0a0a0, #a0a0a0) bottom / 100% 1px no-repeat,
        repeating-linear-gradient(90deg, #f0f0f0 0 9px, #a0a0a0 9px 10px);
}

.cells {
    position: relative;
    width: 240px;
    display: grid;
    grid-template-columns: repeat(24, 10px);
    background:
        linear-gradient(#efefef, #efefef) bottom / 100% 1px no-repeat,
        repeating-linear-gradient(90deg, #fff 0 9px, #efefef 9px 10px);
}

.run {
    height: 24px;
    grid-row: 1;
    width: calc(100% - 1px);
    background: repeating-linear-gradient(90deg, #0000ff 0 9px, #fff 9px 10px);
    box-shadow: 0 1px #fff;
}

.r1 {
    grid-column: 7 / 14;
}

.r2 {
    grid-column: 15 / 22;
}

.r3 {
    grid-column: 23 / 25;
}

.focus {
    grid-row: 1;
    grid-column: 1;
    width: 10px;
    height: 25px;
    margin-left: -1px;
    background-color: #fff;
    border: 1px solid #000;
    outline: 1px dotted #000;
}

.hours-note {
    margin: 11px 0 0 -1px;
}

.hours-side {
    margin-left: 14px;
}

.side-buttons {
    display: flex;
    flex-direction: column;
    gap: 7px;
    margin: 1px 0 0 7px;
}

.legend {
    display: flex;
    margin-top: 55px;
}

.legend-bar {
    flex: none;
    width: 11px;
    height: 50px;
    border-left: 1px solid #8a8a8a;
}

.legend-bar i {
    display: block;
    height: 25px;
    background-color: #0000ff;
}

.legend-bar i + i {
    background-color: #fff;
}

.legend-options {
    display: flex;
    flex-direction: column;
    gap: 12px;
    margin: 1px 0 0 16px;
    letter-spacing: -.2px;
}
```
